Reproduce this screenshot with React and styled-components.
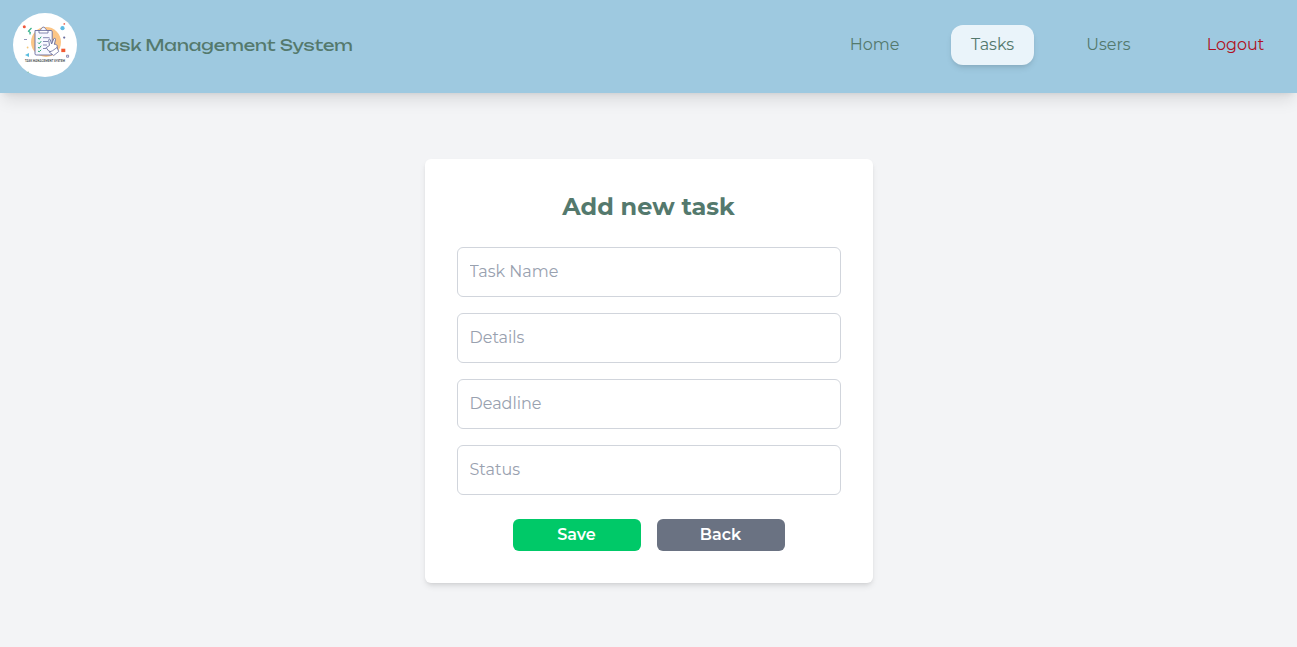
import React from "react";
import styled, { createGlobalStyle } from "styled-components";

const GlobalStyle = createGlobalStyle`
  *, *::before, *::after { box-sizing: border-box; }
  body {
    margin: 0;
    background: #f3f4f6;
    font-family: Montserrat, Inter, "Liberation Sans", sans-serif;
    font-size: 16px;
    line-height: 24px;
  }
`;

const Page = styled.div`
  display: flex;
  flex-direction: column;
  min-height: 647px;
`;

const Header = styled.header`
  display: flex;
  align-items: flex-start;
  justify-content: space-between;
  height: 93px;
  padding: 13px 13px 0;
  background: #9ec9e0;
  box-shadow: 0 10px 15px -3px rgba(0, 0, 0, 0.1), 0 4px 6px -4px rgba(0, 0, 0, 0.1);
`;

const Brand = styled.div`
  display: flex;
  align-items: center;
  gap: 20px;
  height: 64px;
`;

const LogoSvg = styled.svg`
  display: block;
  width: 64px;
  height: 64px;
`;

const BrandName = styled.span`
  font-family: Unbounded, Montserrat, Inter, sans-serif;
  font-size: 16px;
  font-weight: 400;
  color: #54796d;
`;

const Nav = styled.nav`
  display: flex;
  gap: 32px;
  padding-top: 12px;
`;

const NavLink = styled.a`
  display: flex;
  align-items: center;
  justify-content: center;
  width: ${(p) => p.$width}px;
  height: 40px;
  margin-left: ${(p) => p.$offset || 0}px;
  border-radius: 12px;
  color: ${(p) => (p.$danger ? "#b01020" : "#54796d")};
  background: ${(p) => (p.$active ? "#eaf4fa" : "transparent")};
  box-shadow: ${(p) =>
    p.$active ? "0 4px 6px -1px rgba(0,0,0,.1), 0 2px 4px -2px rgba(0,0,0,.1)" : "none"};
`;

const Main = styled.main`
  display: flex;
  justify-content: center;
  align-items: flex-start;
  padding-top: 66px;
`;

const Card = styled.form`
  width: 448px;
  padding: 32px;
  background: #fff;
  border-radius: 6px;
  box-shadow: 0 4px 6px -1px rgba(0, 0, 0, 0.1), 0 2px 4px -2px rgba(0, 0, 0, 0.1);
`;

const Title = styled.h2`
  margin: 0 0 24px;
  font-size: 24px;
  line-height: 32px;
  font-weight: 700;
  text-align: center;
  color: #54796d;
`;

const Fields = styled.div`
  display: flex;
  flex-direction: column;
  gap: 16px;
`;

const Field = styled.input`
  display: block;
  width: 100%;
  height: 50px;
  padding: 11px 12px 13px;
  border: 1px solid #d1d5dc;
  border-radius: 6px;
  background: #fff;
  font: inherit;
  outline: none;
  &::placeholder { color: #99a1af; opacity: 1; }
`;

const Actions = styled.div`
  display: flex;
  justify-content: center;
  gap: 16px;
  margin-top: 24px;
`;

const Button = styled.button`
  width: 128px;
  height: 32px;
  padding: 0;
  border: 0;
  border-radius: 6px;
  background: ${(p) => (p.$primary ? "#00c968" : "#6a7282")};
  color: #fff;
  font: inherit;
  font-weight: 600;
`;

const LogoText = styled.text`
  font-family: Montserrat, Inter, "Liberation Sans", sans-serif;
  font-size: 3.6px;
  font-weight: 600;
  fill: #3c3f48;
`;

function Logo() {
  return (
    <LogoSvg viewBox="0 0 64 64" aria-hidden="true">
      <circle cx="32" cy="32" r="32" fill="#fff" />
      <circle cx="33" cy="29" r="15" fill="#fcc687" />
      <path d="M22 17.5h5.2c.3-1.4 1.4-1.6 1.7-2.4.4-1.3 2.7-1.3 3.1 0 .3.8 1.5 1 1.7 2.4H38a1.2 1.2 0 0 1 1.2 1.2v22.1A1.2 1.2 0 0 1 38 42H23.2a1.2 1.2 0 0 1-1.2-1.2z" fill="#f7f8ff" stroke="#666b9c" strokeWidth=".9" />
      <path d="M26 20h9v-2.5h-9z" fill="#fff" stroke="#666b9c" strokeWidth=".8" />
      <path d="M25 25l1.2 1.3 2-2.6M25 29.5l1.2 1.3 2-2.6M25 34l1.2 1.3 2-2.6M25 38l1.2.8 2-2" fill="none" stroke="#2fa878" strokeWidth="1" />
      <path d="M30 24.7h6.5M30 28.5h5M30 32h4M30 35.5h3" stroke="#777ba9" strokeWidth=".9" />
      <path d="M33.2 34.7l3.3-2.3-.8-5c-.2-1.5 1.3-1.8 1.7-.4l1.2 4 2.1-5c.6-1.3 2.1-.8 1.8.6l-1.1 4.8c1.5-.4 2.7.3 2.8 1.8.3 3.4-.7 5.5-3 7.2l-5.7-2.6z" fill="#fff" stroke="#666b9c" strokeWidth=".9" strokeLinejoin="round" />
      <path d="M36.2 39l3.2-1.2 4.7-3.3 1.6 4-5 4z" fill="#fff" stroke="#666b9c" strokeWidth=".8" />
      <path d="M18.5 15l-3 3.2 1.8 1.3-.5 2" fill="none" stroke="#35b28b" strokeWidth="1.2" />
      <circle cx="11.3" cy="13.8" r="1.5" fill="#ef583d" />
      <circle cx="49.5" cy="15.2" r="2.1" fill="#5fbce4" />
      <circle cx="51.3" cy="10.9" r=".9" fill="#ec6c58" />
      <path d="M11 26.5h3" stroke="#777ba9" strokeWidth=".8" />
      <circle cx="51.2" cy="24.6" r="1.1" fill="#6c6f9f" />
      <circle cx="14.6" cy="34.5" r=".9" fill="#f3c579" />
      <path d="M48.3 35.7h4v3.4h-4z" fill="#f15a32" />
      <path d="M12 42l4-2v4z" fill="#58bde0" />
      <path d="M53.6 42.2h2v2h-2z" fill="#fff" stroke="#6c6f9f" strokeWidth=".8" />
      <path d="M14.5 59.2h1.4" stroke="#67b58a" strokeWidth=".8" />
      <LogoText x="12" y="48.9" textLength="40" lengthAdjust="spacingAndGlyphs">TASK MANAGEMENT SYSTEM</LogoText>
    </LogoSvg>
  );
}

const links = [
  { label: "Home", width: 89 },
  { label: "Tasks", width: 83, active: true },
  { label: "Users", width: 85 },
  { label: "Logout", width: 97, offset: 4, danger: true },
];

const fields = ["Task Name", "Details", "Deadline", "Status"];

export default function App() {
  return (
    <>
      <GlobalStyle />
      <Page>
        <Header>
          <Brand>
            <Logo />
            <BrandName>Task Management System</BrandName>
          </Brand>
          <Nav>
            {links.map((l) => (
              <NavLink key={l.label} $width={l.width} $offset={l.offset} $active={l.active} $danger={l.danger}>
                {l.label}
              </NavLink>
            ))}
          </Nav>
        </Header>
        <Main>
          <Card>
            <Title>Add new task</Title>
            <Fields>
              {fields.map((f) => (
                <Field key={f} placeholder={f} />
              ))}
            </Fields>
            <Actions>
              <Button type="button" $primary>Save</Button>
              <Button type="button">Back</Button>
            </Actions>
          </Card>
        </Main>
      </Page>
    </>
  );
}
